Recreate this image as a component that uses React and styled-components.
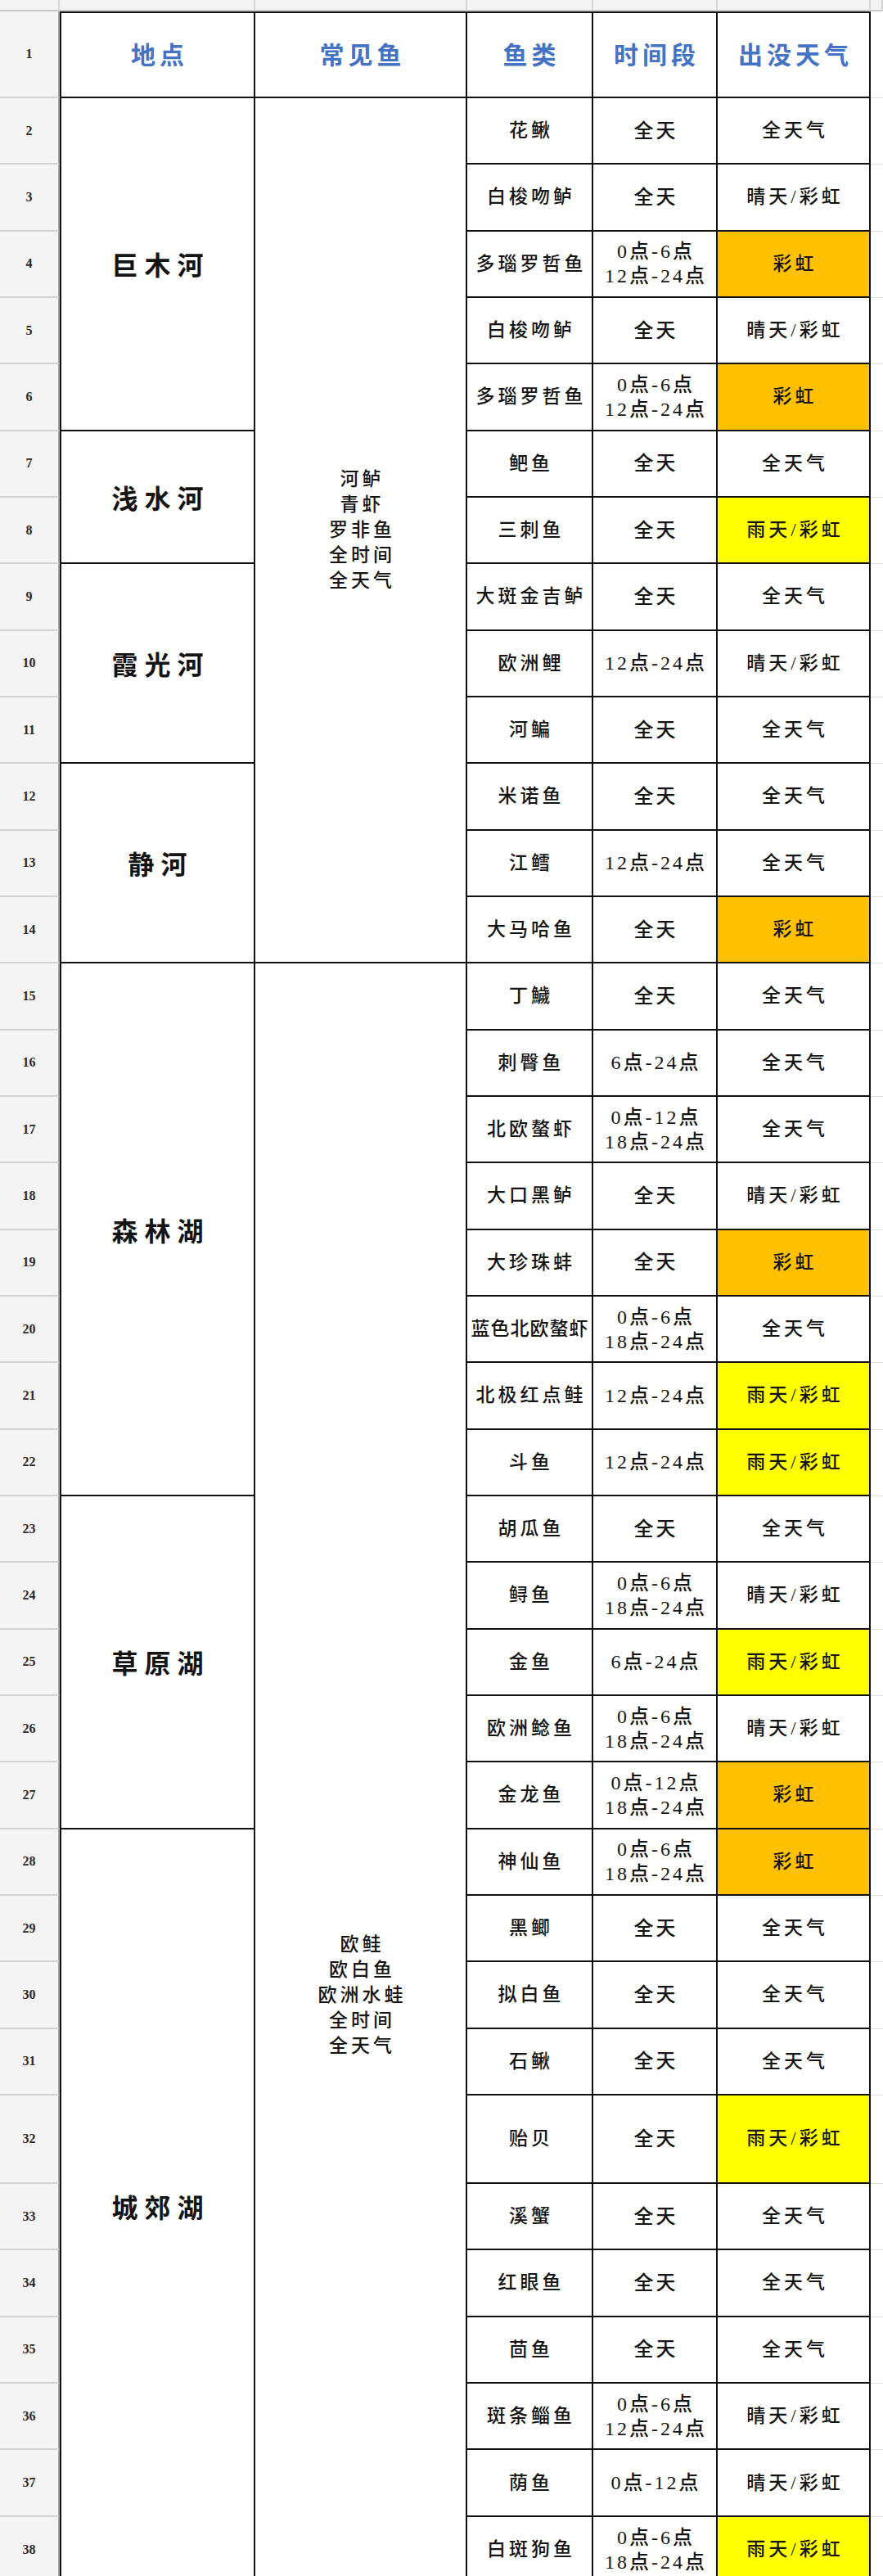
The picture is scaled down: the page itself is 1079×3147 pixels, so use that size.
import React from 'react';
import styled, { createGlobalStyle, css } from 'styled-components';

const GlobalStyle = createGlobalStyle`
  html, body {
    margin: 0;
    padding: 0;
    background: #fff;
  }
  body {
    font-family: 'Liberation Serif', 'Noto Sans CJK SC', serif;
  }
`;

// heights of sheet rows 1..38 (row 1 is the coloured header)
const ROW_H = [106, ...Array(30).fill(81.33), 108, ...Array(5).fill(81.4), 82];
const COL_W = [73, 239, 259, 154, 152, 187];

const places = [
  { name: '巨木河', from: 2, span: 5 },
  { name: '浅水河', from: 7, span: 2 },
  { name: '霞光河', from: 9, span: 3 },
  { name: '静河', from: 12, span: 3 },
  { name: '森林湖', from: 15, span: 8 },
  { name: '草原湖', from: 23, span: 5 },
  { name: '城郊湖', from: 28, span: 11 },
];

const commons = [
  { lines: ['河鲈', '青虾', '罗非鱼', '全时间', '全天气'], from: 2, span: 13, top: 0 },
  { lines: ['欧鲑', '欧白鱼', '欧洲水蛙', '全时间', '全天气'], from: 15, span: 24, top: 1183 },
];

const A = '0点-6点';
const fish = [
  ['花鳅', '全天', '全天气'],
  ['白梭吻鲈', '全天', '晴天/彩虹'],
  ['多瑙罗哲鱼', [A, '12点-24点'], '彩虹', 'orange'],
  ['白梭吻鲈', '全天', '晴天/彩虹'],
  ['多瑙罗哲鱼', [A, '12点-24点'], '彩虹', 'orange'],
  ['鲃鱼', '全天', '全天气'],
  ['三刺鱼', '全天', '雨天/彩虹', 'yellow'],
  ['大斑金吉鲈', '全天', '全天气'],
  ['欧洲鲤', '12点-24点', '晴天/彩虹'],
  ['河鳊', '全天', '全天气'],
  ['米诺鱼', '全天', '全天气'],
  ['江鳕', '12点-24点', '全天气'],
  ['大马哈鱼', '全天', '彩虹', 'orange'],
  ['丁鱥', '全天', '全天气'],
  ['刺臀鱼', '6点-24点', '全天气'],
  ['北欧螯虾', ['0点-12点', '18点-24点'], '全天气'],
  ['大口黑鲈', '全天', '晴天/彩虹'],
  ['大珍珠蚌', '全天', '彩虹', 'orange'],
  ['蓝色北欧螯虾', [A, '18点-24点'], '全天气'],
  ['北极红点鲑', '12点-24点', '雨天/彩虹', 'yellow'],
  ['斗鱼', '12点-24点', '雨天/彩虹', 'yellow'],
  ['胡瓜鱼', '全天', '全天气'],
  ['鲟鱼', [A, '18点-24点'], '晴天/彩虹'],
  ['金鱼', '6点-24点', '雨天/彩虹', 'yellow'],
  ['欧洲鲶鱼', [A, '18点-24点'], '晴天/彩虹'],
  ['金龙鱼', ['0点-12点', '18点-24点'], '彩虹', 'orange'],
  ['神仙鱼', [A, '18点-24点'], '彩虹', 'orange'],
  ['黑鲫', '全天', '全天气'],
  ['拟白鱼', '全天', '全天气'],
  ['石鳅', '全天', '全天气'],
  ['贻贝', '全天', '雨天/彩虹', 'yellow'],
  ['溪蟹', '全天', '全天气'],
  ['红眼鱼', '全天', '全天气'],
  ['茴鱼', '全天', '全天气'],
  ['斑条鲻鱼', [A, '12点-24点'], '晴天/彩虹'],
  ['荫鱼', '0点-12点', '晴天/彩虹'],
  ['白斑狗鱼', [A, '18点-24点'], '雨天/彩虹', 'yellow'],
];

const tones = { orange: '#FFC000', yellow: '#FFFF00' };

const placed = css`
  grid-row: ${(p) => p.$r} / span ${(p) => p.$s || 1};
  grid-column: ${(p) => p.$c};
`;

const Sheet = styled.div`
  display: grid;
  grid-template-columns: ${COL_W.map((w) => `${w}px`).join(' ')} 1fr;
  grid-template-rows: 14px ${ROW_H.map((h) => `${h}px`).join(' ')};
  height: 3147px;
  overflow: hidden;
  background: #fff;
`;

const ColLetter = styled.div`
  ${placed};
  background: #f3f3f3;
  border-right: 2px solid #d6d6d6;
  border-bottom: 2px solid #c9c9c9;
  box-sizing: border-box;
`;

const RowNum = styled.div`
  ${placed};
  display: flex;
  align-items: center;
  justify-content: center;
  background: #f4f4f4;
  border-right: 2px solid #a9a9a9;
  border-bottom: 2px solid #d2d2d2;
  box-sizing: border-box;
  font-family: 'Liberation Serif', serif;
  font-size: 16px;
  font-weight: 700;
  color: #2a2a2a;
`;

const Filler = styled.div`
  ${placed};
  border-bottom: 1px solid #e2e2e2;
`;

const Box = styled.div`
  ${placed};
  display: flex;
  flex-direction: column;
  align-items: center;
  justify-content: center;
  box-sizing: border-box;
  overflow: hidden;
  border-right: 2px solid #111;
  border-bottom: 2px solid #111;
  ${(p) => p.$first && 'border-left: 2px solid #111;'}
  background: ${(p) => tones[p.$tone] || '#fff'};
  color: #141414;
  white-space: nowrap;
  text-align: center;
`;

const HeadCell = styled(Box)`
  border-top: 2px solid #111;
  padding-left: 5px;
  padding-bottom: 4px;
  font-family: 'Noto Sans CJK SC', sans-serif;
  font-size: 30px;
  font-weight: 700;
  letter-spacing: 5px;
  color: #4472c4;
`;

const PlaceCell = styled(Box)`
  padding-left: 8px;
  font-family: 'Noto Sans CJK SC', sans-serif;
  font-size: 32px;
  font-weight: 700;
  letter-spacing: 8px;
`;

const CommonCell = styled(Box)`
  justify-content: ${(p) => (p.$top ? 'flex-start' : 'center')};
  padding-top: ${(p) => p.$top}px;
  padding-left: 4px;
  font-size: 23px;
  font-weight: 500;
  letter-spacing: 4px;
  line-height: 31px;
`;

const Cell = styled(Box)`
  padding-left: ${(p) => (p.$tight ? 1 : 4)}px;
  font-size: 23px;
  font-weight: 500;
  letter-spacing: ${(p) => (p.$tight ? 1 : 4)}px;
  line-height: 31px;
`;

const TimeCell = styled(Cell)`
  padding-left: 3px;
  font-size: 24px;
  letter-spacing: 3px;
  line-height: 30px;
`;

const Line = styled.span`
  display: block;
`;

const headers = ['地点', '常见鱼', '鱼类', '时间段', '出没天气'];

export default function App() {
  return (
    <>
      <GlobalStyle />
      <Sheet>
        {[1, 2, 3, 4, 5, 6, 7].map((c) => (
          <ColLetter key={c} $r={1} $c={c} />
        ))}

        {ROW_H.map((_, i) => (
          <RowNum key={`n${i}`} $r={i + 2} $c={1}>
            {i + 1}
          </RowNum>
        ))}
        {ROW_H.map((_, i) => (
          <Filler key={`f${i}`} $r={i + 2} $c={7} />
        ))}

        {headers.map((h, i) => (
          <HeadCell key={h} $r={2} $c={i + 2} $first={i === 0}>
            {h}
          </HeadCell>
        ))}

        {places.map((p) => (
          <PlaceCell key={p.name} $r={p.from + 1} $s={p.span} $c={2} $first>
            {p.name}
          </PlaceCell>
        ))}

        {commons.map((g) => (
          <CommonCell key={g.from} $r={g.from + 1} $s={g.span} $c={3} $top={g.top}>
            {g.lines.map((l) => (
              <Line key={l}>{l}</Line>
            ))}
          </CommonCell>
        ))}

        {fish.map(([name, time, weather, tone], i) => (
          <React.Fragment key={i}>
            <Cell $r={i + 3} $c={4} $tight={name.length > 5}>
              {name}
            </Cell>
            <TimeCell $r={i + 3} $c={5}>
              {(Array.isArray(time) ? time : [time]).map((t) => (
                <Line key={t}>{t}</Line>
              ))}
            </TimeCell>
            <Cell $r={i + 3} $c={6} $tone={tone}>
              {weather}
            </Cell>
          </React.Fragment>
        ))}
      </Sheet>
    </>
  );
}
